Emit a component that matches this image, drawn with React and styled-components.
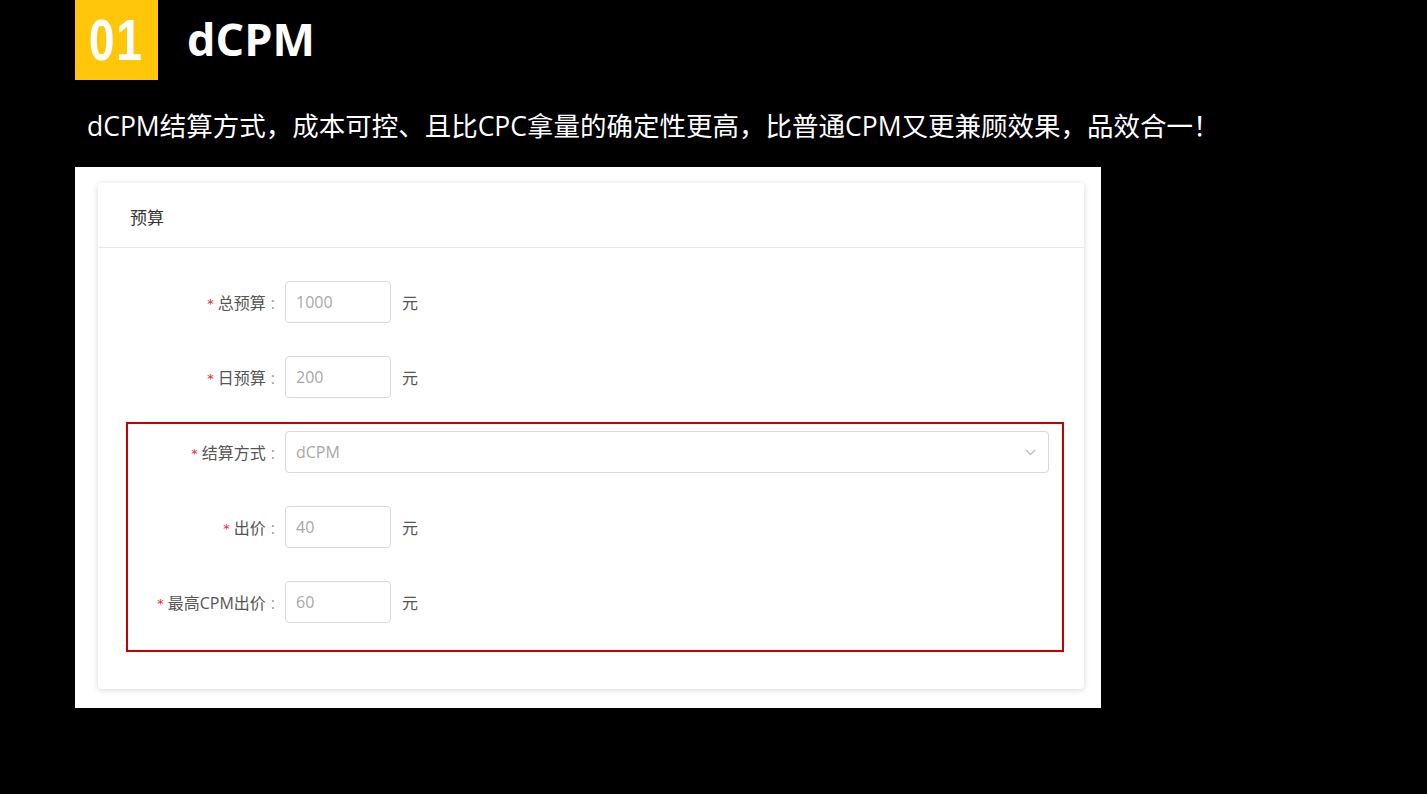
import React from "react";
import styled, { createGlobalStyle } from "styled-components";

const GlobalStyle = createGlobalStyle`
  html, body { margin: 0; padding: 0; background: #000; }
  body {
    font-family: "Open Sans", "Noto Sans CJK SC", sans-serif;
    -webkit-font-smoothing: antialiased;
  }
`;

const Page = styled.div`
  width: 1427px;
  height: 794px;
  background: #000;
  padding-left: 75px;
  box-sizing: border-box;
  overflow: hidden;
`;

const TitleBar = styled.div`
  display: flex;
  align-items: center;
  height: 80px;
  gap: 29px;
`;

const Badge = styled.div`
  width: 83px;
  height: 80px;
  background: #ffc60a;
  display: flex;
  align-items: center;
  justify-content: center;
  color: #fff;
  font-family: "Liberation Sans", Arial, sans-serif;
  font-weight: 700;
  font-size: 58px;
  line-height: 1;
  letter-spacing: 2px;
`;

const BadgeText = styled.span`
  display: inline-block;
  transform: scaleX(0.8);
  margin-top: -1px;
`;

const Title = styled.h1`
  margin: 0;
  color: #fff;
  font-family: "Open Sans", sans-serif;
  font-weight: 700;
  font-size: 45px;
  line-height: 1;
  margin-top: -4px;
`;

const Subtitle = styled.p`
  margin: 28px 0 0 12px;
  color: #fff;
  font-family: "Open Sans", "Noto Sans CJK SC", sans-serif;
  font-size: 26.5px;
  line-height: 36px;
  white-space: nowrap;
`;

const Shot = styled.div`
  margin-top: 23px;
  width: 1026px;
  height: 541px;
  background: #fff;
  box-sizing: border-box;
  padding: 16px 17px 0 23px;
`;

const Card = styled.div`
  width: 986px;
  height: 506px;
  background: #fff;
  border-radius: 4px;
  box-shadow: 0 1px 6px rgba(0, 0, 0, 0.16);
  font-family: "Open Sans", "Noto Sans CJK SC", sans-serif;
`;

const CardHeader = styled.div`
  height: 65px;
  border-bottom: 1px solid #e8e8e8;
  padding-left: 32px;
  display: flex;
  align-items: center;
  font-size: 17px;
  color: #333;
  padding-top: 3px;
  box-sizing: border-box;
`;

const FormBody = styled.div`
  padding: 33px 20px 0 28px;
`;

const Group = styled.div`
  display: flex;
  flex-direction: column;
  gap: 33px;
  border: 2px solid ${(p) => (p.$highlight ? "#c40000" : "transparent")};
  padding: ${(p) => (p.$highlight ? "7px 13px 27px 0" : "0 13px 0 0")};
  margin-top: ${(p) => (p.$highlight ? "22px" : "-2px")};
`;

const Row = styled.div`
  display: flex;
  align-items: center;
  height: 42px;
`;

const Label = styled.label`
  width: 157px;
  flex: none;
  text-align: right;
  font-size: 16px;
  color: #555;
  white-space: nowrap;
`;

const Required = styled.span`
  color: #f5222d;
  font-family: "DejaVu Sans", sans-serif;
  font-size: 13px;
  margin-right: 4px;
  vertical-align: 1px;
`;

const Colon = styled.span`
  color: #999;
  margin: 0 10px 0 5px;
`;

const Input = styled.div`
  box-sizing: border-box;
  width: ${(p) => (p.$wide ? "auto" : "106px")};
  flex: ${(p) => (p.$wide ? "1" : "none")};
  height: 42px;
  border: 1px solid #d9d9d9;
  border-radius: 4px;
  padding: 0 12px 0 10px;
  display: flex;
  align-items: center;
  justify-content: space-between;
  font-size: 16px;
  color: #a8a8a8;
`;

const Unit = styled.span`
  margin-left: 11px;
  font-size: 16px;
  color: #555;
`;

const Chevron = () => (
  <svg width="11" height="7" viewBox="0 0 11 7" fill="none">
    <path d="M1 1l4.5 4.5L10 1" stroke="#bbb" strokeWidth="1.4" />
  </svg>
);

const Field = ({ label, value, wide }) => (
  <Row>
    <Label>
      <Required>*</Required>
      {label}
      <Colon>:</Colon>
    </Label>
    <Input $wide={wide}>
      <span>{value}</span>
      {wide && <Chevron />}
    </Input>
    {!wide && <Unit>元</Unit>}
  </Row>
);

export default function App() {
  return (
    <>
      <GlobalStyle />
      <Page>
        <TitleBar>
          <Badge>
            <BadgeText>01</BadgeText>
          </Badge>
          <Title>dCPM</Title>
        </TitleBar>
        <Subtitle>
          dCPM结算方式，成本可控、且比CPC拿量的确定性更高，比普通CPM又更兼顾效果，品效合一！
        </Subtitle>
        <Shot>
          <Card>
            <CardHeader>预算</CardHeader>
            <FormBody>
              <Group>
                <Field label="总预算" value="1000" />
                <Field label="日预算" value="200" />
              </Group>
              <Group $highlight>
                <Field label="结算方式" value="dCPM" wide />
                <Field label="出价" value="40" />
                <Field label="最高CPM出价" value="60" />
              </Group>
            </FormBody>
          </Card>
        </Shot>
      </Page>
    </>
  );
}
